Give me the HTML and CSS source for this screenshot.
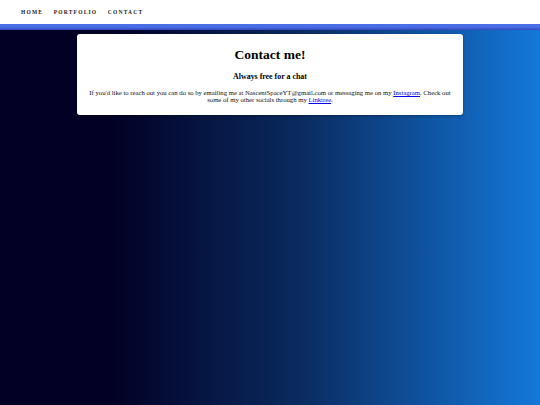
FILE: index.html
```html
<!DOCTYPE html>
<html>
<head>
<meta charset="utf-8">
<link rel="stylesheet" href="styles.css">
</head>
<body>
<nav class="nav">
  <a class="nav-item" href="#">Home</a>
  <a class="nav-item" href="#">Portfolio</a>
  <a class="nav-item" href="#">Contact</a>
</nav>
<div class="stripe"></div>
<main class="page">
  <section class="card">
    <h1 class="title">Contact me!</h1>
    <h3 class="subtitle">Always free for a chat</h3>
    <p class="text">If you'd like to reach out you can do so by emailing me at NascentSpaceYT@gmail.com or messaging me on my <a href="#">Instagram</a>. Check out some of my other socials through my <a href="#">Linktree</a>.</p>
  </section>
</main>
</body>
</html>
```
FILE: styles.css
```css
html, body {
  margin: 0;
  padding: 0;
  height: 100%;
}
body {
  font-family: "Liberation Serif", "Times New Roman", serif;
  background: linear-gradient(90deg, #020024 0%, #020024 20%, #0a2a5e 55%, #1478da 100%);
  display: flex;
  flex-direction: column;
}
.nav {
  background: #fff;
  height: 24px;
  display: flex;
  align-items: center;
  padding-left: 21px;
  gap: 10.5px;
}
.nav-item {
  font-size: 5.5px;
  font-weight: bold;
  letter-spacing: 1.2px;
  text-transform: uppercase;
  color: #222;
  text-decoration: none;
}
.stripe {
  height: 6px;
  background: linear-gradient(180deg, #4a6ee6 0%, #4a6ee6 50%, #3448bc 100%);
}
.page {
  padding-top: 4px;
  display: flex;
  justify-content: center;
}
.card {
  background: #fff;
  width: 386px;
  border-radius: 3px;
  box-shadow: 0 1px 3px rgba(0,0,0,0.3);
  text-align: center;
  padding: 12px 8px 12px;
  box-sizing: border-box;
}
.title {
  font-size: 13.5px;
  line-height: 18px;
  margin: 0 0 7px;
}
.subtitle {
  font-size: 7.9px;
  line-height: 11px;
  margin: 0 0 7px;
}
.text {
  font-size: 6.7px;
  margin: 0;
  color: #111;
  line-height: 7px;
}
.text a {
  color: #0000ee;
}
```
